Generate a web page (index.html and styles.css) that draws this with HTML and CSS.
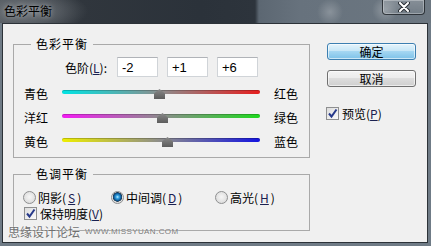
FILE: index.html
```html
<!DOCTYPE html>
<html lang="zh-CN">
<head>
  <meta charset="UTF-8">
  <title>色彩平衡</title>
  <link rel="stylesheet" href="styles.css">
</head>
<body>
  <div class="window">
    <div class="titlebar">
      <span class="title">色彩平衡</span>
      <span class="close">
        <svg width="12" height="10" viewBox="0 0 12 10">
          <path d="M2 1 L10 9 M10 1 L2 9" stroke="#2a2f35" stroke-width="4" stroke-linecap="round"/>
          <path d="M2 1 L10 9 M10 1 L2 9" stroke="#fff" stroke-width="2" stroke-linecap="round"/>
        </svg>
      </span>
    </div>

    <div class="client">
      <div class="main">
        <fieldset>
          <legend>色彩平衡</legend>
          <div class="levels">
            <label>色阶(<u class="key">L</u>):</label>
            <input type="text" value="-2">
            <input type="text" value="+1">
            <input type="text" value="+6">
          </div>
          <div class="slider-row">
            <span class="name">青色</span>
            <div class="slider">
              <div class="track cyan-red"></div>
              <div class="thumb" style="left: 92px"></div>
            </div>
            <span class="name-right">红色</span>
          </div>
          <div class="slider-row">
            <span class="name">洋红</span>
            <div class="slider">
              <div class="track magenta-green"></div>
              <div class="thumb" style="left: 95px"></div>
            </div>
            <span class="name-right">绿色</span>
          </div>
          <div class="slider-row">
            <span class="name">黄色</span>
            <div class="slider">
              <div class="track yellow-blue"></div>
              <div class="thumb" style="left: 100px"></div>
            </div>
            <span class="name-right">蓝色</span>
          </div>
        </fieldset>

        <fieldset class="tone-box">
          <legend>色调平衡</legend>
          <div class="tone">
            <span class="opt"><span class="radio"></span>阴影(<u class="key">S</u>)</span>
            <span class="opt"><span class="radio checked"></span>中间调(<u class="key">D</u>)</span>
            <span class="opt"><span class="radio"></span>高光(<u class="key">H</u>)</span>
          </div>
          <div class="check-row">
            <span class="check">
              <svg width="11" height="11" viewBox="0 0 11 11"><path d="M2 5.5 L4.5 8.5 L9.5 1.5" fill="none" stroke="#26398a" stroke-width="2"/></svg>
            </span>保持明度(<u class="key">V</u>)
          </div>
        </fieldset>
      </div>

      <div class="side">
        <div class="btn btn-default">确定</div>
        <div class="btn">取消</div>
        <div class="check-row preview">
          <span class="check">
            <svg width="11" height="11" viewBox="0 0 11 11"><path d="M2 5.5 L4.5 8.5 L9.5 1.5" fill="none" stroke="#26398a" stroke-width="2"/></svg>
          </span>预览(<u class="key">P</u>)
        </div>
      </div>

      <div class="watermark">思缘设计论坛<span class="url">WWW.MISSYUAN.COM</span></div>
    </div>
  </div>
</body>
</html>
```

FILE: styles.css
```css
body {
  margin: 0;
  font-family: "Noto Sans CJK SC", sans-serif;
  font-size: 12px;
  color: #000;
}
.window {
  width: 431px;
  height: 246px;
  background: #6f7b86;
  display: flex;
  flex-direction: column;
}
.titlebar {
  height: 23px;
  flex: none;
  display: flex;
  justify-content: space-between;
  align-items: flex-start;
  background:
    radial-gradient(circle at 330px 12px, rgba(255,255,255,.22), transparent 13px),
    radial-gradient(circle at 385px 10px, rgba(255,255,255,.25), transparent 13px),
    radial-gradient(ellipse 60px 22px at 28px 11px, rgba(150,155,160,.6), transparent),
    linear-gradient(90deg, #4c5258 0, #30363d 80px, #2b323a 200px, #2d343c 255px, #5c6772 259px, #67727d 300px, #6c7781 100%);
}
.title {
  padding-left: 4px;
  line-height: 22px;
  text-shadow: 0 0 5px rgba(200,205,210,.8);
}
.close {
  width: 43px;
  height: 15px;
  margin-right: 6px;
  box-sizing: border-box;
  border: 1px solid rgba(25,30,35,.8);
  border-top: 0;
  border-radius: 0 0 4px 4px;
  box-shadow: inset 0 0 0 1px rgba(255,255,255,.3);
  background: linear-gradient(rgba(255,255,255,.18), rgba(255,255,255,.05));
  display: flex;
  justify-content: center;
  align-items: center;
}
.client {
  flex: 1;
  margin: 0 3px 3px 2px;
  border: 1px solid #2c3238;
  background: #f0f0f0;
  position: relative;
  display: flex;
  gap: 17px;
  padding: 12px 0 0 10px;
}
.main {
  width: 297px;
}
fieldset {
  margin: 0;
  padding: 5px 10px 9px;
  border: 1px solid #a9a9a9;
  min-width: 0;
}
legend {
  margin-left: 7px;
  padding: 0 5px;
  letter-spacing: 1px;
  line-height: 16px;
}
.key {
  color: #1a2050;
}
.levels {
  display: flex;
  align-items: center;
  gap: 9px;
  height: 20px;
}
.levels label {
  width: 83px;
  margin-right: 1px;
  text-align: right;
}
.levels input {
  width: 41px;
  height: 20px;
  box-sizing: border-box;
  margin: 0;
  border: 1px solid #d0d4d8;
  border-top-color: #b0b3b8;
  padding: 0 4px;
  font-family: "Liberation Sans", sans-serif;
  font-size: 13px;
  background: #fff;
}
.slider-row {
  display: flex;
  align-items: center;
  height: 14px;
  margin-top: 10px;
}
.levels + .slider-row {
  margin-top: 9px;
}
.name {
  width: 38px;
}
.name-right {
  margin-left: 14px;
}
.slider {
  width: 198px;
  height: 14px;
  position: relative;
}
.track {
  margin-top: 4px;
  height: 4px;
  border-radius: 2px;
  box-shadow: inset 0 1px 0 rgba(0,0,0,.2);
}
.cyan-red {
  background: linear-gradient(90deg, #00e4e4, #8c8c8c 50%, #e61e1e);
}
.magenta-green {
  background: linear-gradient(90deg, #f41cf4, #8c8c8c 50%, #1ed81e);
}
.yellow-blue {
  background: linear-gradient(90deg, #eeee00, #8c8c8c 50%, #1414e0);
}
.thumb {
  position: absolute;
  top: 3px;
  width: 11px;
  height: 10px;
  background: linear-gradient(#8a8a8a, #5c5c5c);
  clip-path: polygon(50% 0, 100% 45%, 100% 100%, 0 100%, 0 45%);
}
.tone-box {
  margin-top: 8px;
  padding: 7px 10px 10px;
}
.tone {
  display: grid;
  grid-template-columns: 88px 104px auto;
  height: 14px;
  align-items: center;
  margin-left: -1px;
}
.opt {
  display: flex;
  align-items: center;
  gap: 2px;
}
.radio {
  width: 13px;
  height: 13px;
  box-sizing: border-box;
  border-radius: 50%;
  border: 1px solid #8e8f90;
  background: radial-gradient(circle at 50% 45%, #f6f6f6, #d4d4d4);
}
.radio.checked {
  background: radial-gradient(circle at 50% 45%, #c8f0ff 0, #3aa8e6 1.5px, #0c5c9c 3.5px, #20384e 4.5px, #e2e2e2 5px, #cfcfcf);
}
.check-row {
  display: flex;
  align-items: center;
  height: 14px;
  margin-top: 3px;
}
.check {
  width: 13px;
  height: 13px;
  box-sizing: border-box;
  margin-right: 3px;
  border: 1px solid #8e8f90;
  background: linear-gradient(135deg, #dcdcdc, #fbfbfb);
  display: flex;
  justify-content: center;
  align-items: center;
}
.side {
  width: 89px;
  padding-top: 7px;
  display: flex;
  flex-direction: column;
}
.btn {
  height: 17px;
  box-sizing: border-box;
  border: 1px solid #707070;
  border-radius: 3px;
  background: linear-gradient(#f3f3f3, #ebebeb 50%, #dddddd 50%, #cfcfcf);
  box-shadow: inset 0 0 0 1px rgba(255,255,255,.6);
  display: flex;
  justify-content: center;
  align-items: center;
  line-height: 1;
}
.btn + .btn {
  margin-top: 10px;
}
.btn-default {
  border-color: #3c7fb1;
  background: linear-gradient(#e5f4fc, #c4e5f6 50%, #a4d6f2 50%, #7dc2e8);
}
.preview {
  margin-top: 19px;
  margin-left: -1px;
}
.watermark {
  position: absolute;
  left: 5px;
  top: 201px;
  line-height: 14px;
  color: #707070;
  text-shadow: 0 0 2px #fff;
  display: flex;
  align-items: center;
}
.url {
  margin-left: 5px;
  font-family: "Liberation Sans", sans-serif;
  font-size: 8px;
  letter-spacing: .4px;
  color: #7a7a7a;
}
```
